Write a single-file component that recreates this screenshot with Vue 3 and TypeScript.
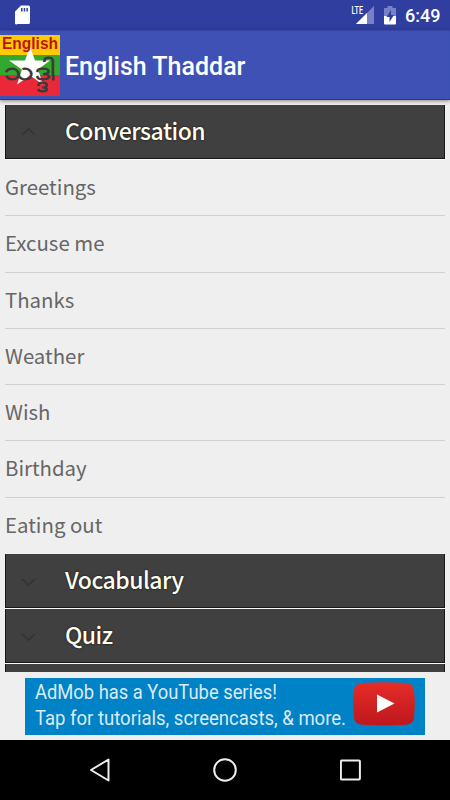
<script setup lang="ts">
interface Section {
  title: string
  open: boolean
  items: string[]
}

const sections: Section[] = [
  {
    title: 'Conversation',
    open: true,
    items: ['Greetings', 'Excuse me', 'Thanks', 'Weather', 'Wish', 'Birthday', 'Eating out'],
  },
  { title: 'Vocabulary', open: false, items: [] },
  { title: 'Quiz', open: false, items: [] },
  { title: '', open: false, items: [] },
]
</script>

<template>
  <div class="screen">
    <header class="status">
      <svg class="sd" width="16" height="20" viewBox="0 0 16 20">
        <path fill="#fff" fill-rule="evenodd" d="M6 .5h7.500a1.500 1.500 0 0 1 1.500 1.500v15.500a1.500 1.500 0 0 1-1.500 1.500h-11A1.500 1.500 0 0 1 0 17.500V6.500ZM6 3v3.500h1.500V3ZM8.700 3v3.500h1.500V3ZM11.400 3v3.500h1.500V3Z" />
      </svg>
      <span class="grow"></span>
      <svg class="signal" width="24" height="20" viewBox="0 0 24 20">
        <path fill="#7881c6" d="M23 1v18H5Z" />
        <path fill="#303f9f" d="M0 0h13v10H0Z" />
        <path fill="#fff" d="M16 8v11H5Z" />
        <text x="0.500" y="8.500" textLength="11.500" lengthAdjust="spacingAndGlyphs">LTE</text>
      </svg>
      <svg class="battery" width="12" height="19" viewBox="0 0 12 19">
        <path fill="#7881c6" d="M3.500 0h5v2H12v8H0V2h3.500Z" />
        <path fill="#fff" d="M0 10h12v7.500a1 1 0 0 1-1 1H1a1 1 0 0 1-1-1Z" />
        <path fill="#303f9f" d="M7 4 2.500 11H5.500v5L10 9H7Z" />
      </svg>
      <span class="clock">6:49</span>
    </header>

    <div class="appbar">
      <svg class="logo" width="60" height="61" viewBox="0 0 60 61">
        <rect width="60" height="20" fill="#fecb00" />
        <rect y="20" width="60" height="20" fill="#34a72f" />
        <rect y="40" width="60" height="21" fill="#ea2839" />
        <path fill="#fff" d="M30 11.500 35 25.500H50L38 34.500l5 15-13-9-13 9 5-15-13-9h16Z" />
        <text class="logo-en" x="2" y="13.500" textLength="56" lengthAdjust="spacingAndGlyphs">English</text>
        <text class="logo-my" x="4" y="45" textLength="51" lengthAdjust="spacingAndGlyphs">သဒ္ဒါ</text>
      </svg>
      <h1>English Thaddar</h1>
    </div>

    <main class="list">
      <section v-for="(s, i) in sections" :key="i">
        <div class="group" :class="{ open: s.open }">
          <svg v-if="s.title" width="16" height="10" viewBox="0 0 16 10">
            <path fill="none" stroke="#333" stroke-width="1.600" :d="s.open ? 'M1 8 7.500 1.800 14 8' : 'M1 2 7.500 8.200 14 2'" />
          </svg>
          <h2>{{ s.title }}</h2>
        </div>
        <ul v-if="s.open">
          <li v-for="item in s.items" :key="item">{{ item }}</li>
        </ul>
      </section>
    </main>

    <div class="ad-strip">
      <div class="ad">
        <div class="ad-copy">
          <svg width="318" height="57" viewBox="0 0 318 57">
            <text x="0" y="21" textLength="242" lengthAdjust="spacingAndGlyphs">AdMob has a YouTube series!</text>
            <text x="0" y="47" textLength="311" lengthAdjust="spacingAndGlyphs">Tap for tutorials, screencasts, &amp; more.</text>
          </svg>
        </div>
        <svg class="play" width="62" height="44" viewBox="0 0 62 44">
          <defs>
            <linearGradient id="red" x1="0" y1="0" x2="0" y2="1">
              <stop offset="0" stop-color="#e62d28" />
              <stop offset="1" stop-color="#bd171d" />
            </linearGradient>
          </defs>
          <path fill="url(#red)" d="M9 1Q31-.5 53 1 60 1.500 61 8q1.500 14 0 28-1 6-8 6.700-22 1.500-44 0Q2 42 1 36-.5 22 1 8 2 1.500 9 1Z" />
          <path fill="#fff" d="M24 12.500 41.500 21.500 24 30.500Z" />
        </svg>
      </div>
    </div>

    <nav class="nav">
      <svg width="22" height="26" viewBox="0 0 22 26"><path d="M20.500 2.500v21L3 13Z" /></svg>
      <svg width="26" height="26" viewBox="0 0 26 26"><circle cx="13" cy="13" r="10.800" /></svg>
      <svg width="22" height="22" viewBox="0 0 22 22"><rect x="0.900" y="1.500" width="19" height="19" rx="1" /></svg>
    </nav>
  </div>
</template>

<style>
body {
  background: #efefef;
}
</style>

<style scoped>
.screen {
  width: 450px;
  height: 800px;
  display: flex;
  flex-direction: column;
  overflow: hidden;
  background: #efefef;
  font-family: Roboto, 'Liberation Sans', sans-serif;
}
.status {
  box-sizing: border-box;
  height: 30px;
  flex: none;
  display: flex;
  align-items: flex-start;
  padding: 5px 10px 0 15px;
  background: #303f9f;
  color: #fff;
}
.grow {
  flex: 1;
}
.signal {
  margin-right: 9px;
}
.signal text {
  font: 500 10px Roboto, sans-serif;
  fill: #fff;
}
.battery {
  margin: 1px 9px 0 0;
}
.clock {
  font-size: 18px;
  font-weight: 500;
  line-height: 22px;
  width: 35px;
  white-space: nowrap;
}
.appbar {
  box-sizing: border-box;
  height: 70px;
  flex: none;
  display: flex;
  align-items: center;
  padding-top: 1px;
  background: #3f51b5;
  border-bottom: 1px solid #173aae;
  box-shadow: 0 1px 4px rgba(0, 0, 0, 0.45), inset 0 1px 1px #3646a5;
  z-index: 1;
}
.logo {
  margin-top: 1px;
}
.logo-en {
  font: 700 16px 'Liberation Sans', sans-serif;
  fill: #c0101c;
}
.logo-my {
  font: 700 26px 'Liberation Sans', sans-serif;
  fill: #3a3a3a;
}
h1 {
  margin: 4px 0 0 5px;
  font-size: 25px;
  font-weight: 500;
  line-height: 30px;
  color: #fff;
}
.list {
  height: 567px;
  flex: none;
  overflow: hidden;
  margin: 5px 5px 0;
}
.group {
  box-sizing: border-box;
  height: 54px;
  margin-bottom: 1px;
  display: flex;
  align-items: center;
  padding-left: 15px;
  background: #404040;
  border: solid #181818;
  border-width: 0 1px 1px;
  box-shadow: 0 1px 0 #fafafa;
}
.group:not(.open) svg {
  margin-top: 3px;
}
.group h2 {
  margin: -3px 0 0 28px;
  font: 500 23px/36px 'Noto Sans CJK SC', 'Noto Sans', sans-serif;
  letter-spacing: -0.500px;
  color: #fffff0;
  text-shadow: 0 0 2px #000;
}
ul {
  margin: 0;
  padding: 0;
  list-style: none;
}
li {
  box-sizing: border-box;
  height: 56.280px;
  border-bottom: 1px solid #d0d0d0;
  font: 400 20.400px/52px 'Noto Sans CJK SC', 'Noto Sans', sans-serif;
  color: #666;
}
li:last-child {
  border-bottom-color: transparent;
}
.ad-strip {
  height: 68px;
  flex: none;
  display: flex;
  justify-content: center;
  align-items: center;
}
.ad {
  width: 400px;
  height: 57px;
  display: flex;
  align-items: center;
  background: #0082c6;
}
.ad-copy {
  width: 328px;
  padding-left: 10px;
  box-sizing: border-box;
}
.ad-copy svg {
  display: block;
  overflow: visible;
}
.ad-copy text {
  font: 400 21px Roboto, sans-serif;
  fill: #dceaf2;
}
.play {
  margin-top: -5px;
}
.nav {
  height: 60px;
  flex: none;
  display: flex;
  align-items: center;
  justify-content: center;
  gap: 102px;
  background: #000;
}
.nav path,
.nav circle,
.nav rect {
  fill: none;
  stroke: #eee;
  stroke-width: 2;
  stroke-linejoin: round;
}
</style>
